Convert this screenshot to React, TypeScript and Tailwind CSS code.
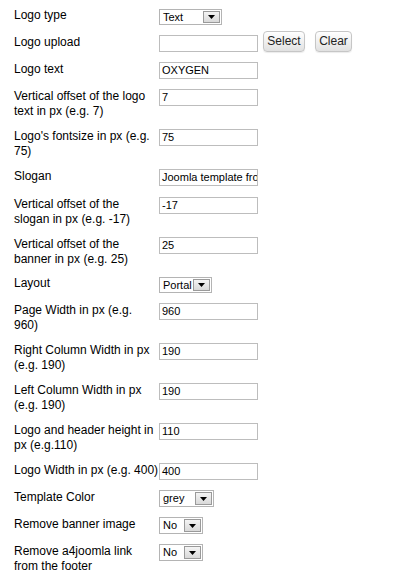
import React from 'react';

type Field =
  | { label: string[]; kind: 'text'; value: string }
  | { label: string[]; kind: 'select'; value: string; width: string; tall?: boolean }
  | { label: string[]; kind: 'upload' };

// Template parameters, in the order the form shows them
const fields: Field[] = [
  { label: ['Logo type'], kind: 'select', value: 'Text', width: 'w-[63px]' },
  { label: ['Logo upload'], kind: 'upload' },
  { label: ['Logo text'], kind: 'text', value: 'OXYGEN' },
  { label: ['Vertical offset of the logo', 'text in px (e.g. 7)'], kind: 'text', value: '7' },
  { label: ["Logo's fontsize in px (e.g.", '75)'], kind: 'text', value: '75' },
  { label: ['Slogan'], kind: 'text', value: 'Joomla template from a4joomla' },
  { label: ['Vertical offset of the', 'slogan in px (e.g. -17)'], kind: 'text', value: '-17' },
  { label: ['Vertical offset of the', 'banner in px (e.g. 25)'], kind: 'text', value: '25' },
  { label: ['Layout'], kind: 'select', value: 'Portal', width: 'w-[53px]' },
  { label: ['Page Width in px (e.g.', '960)'], kind: 'text', value: '960' },
  { label: ['Right Column Width in px', '(e.g. 190)'], kind: 'text', value: '190' },
  { label: ['Left Column Width in px', '(e.g. 190)'], kind: 'text', value: '190' },
  { label: ['Logo and header height in', 'px (e.g.110)'], kind: 'text', value: '110' },
  { label: ['Logo Width in px (e.g. 400)'], kind: 'text', value: '400' },
  { label: ['Template Color'], kind: 'select', value: 'grey', width: 'w-[55px]', tall: true },
  { label: ['Remove banner image'], kind: 'select', value: 'No', width: 'w-[44px]', tall: true },
  { label: ['Remove a4joomla link', 'from the footer'], kind: 'select', value: 'No', width: 'w-[44px]', tall: true },
];

const TextInput = ({ value }: { value: string }) => (
  <div className="w-[99px] h-[17px] border border-[#bdbdbd] bg-white pl-[2px] text-[11px] leading-[15px] text-black overflow-hidden whitespace-nowrap">
    {value}
  </div>
);

const FakeSelect = ({ value, width, tall }: { value: string; width: string; tall?: boolean }) => (
  <div
    className={`${width} ${tall ? 'h-[17px]' : 'h-[16px]'} flex items-stretch border border-[#b4b4b4] bg-white`}
  >
    <span className="flex-1 pl-[3px] text-[11px] leading-[14px] text-black overflow-hidden whitespace-nowrap">
      {value}
    </span>
    <span className="w-[17px] my-[1px] mr-[1px] flex items-center justify-center border border-[#9a9a9a] bg-gradient-to-b from-[#f4f4f4] to-[#d9d9d9]">
      <svg width="7" height="4" viewBox="0 0 7 4">
        <path d="M0 0h7L3.5 4z" fill="#000" />
      </svg>
    </span>
  </div>
);

const Button = ({ children, width }: { children: React.ReactNode; width: string }) => (
  <button
    className={`${width} h-[21px] -mt-[4px] rounded-[4px] border border-[#c6c6c6] bg-gradient-to-b from-white to-[#e1e1e1] text-[12px] leading-[19px] text-[#222] shadow-[0_1px_1px_rgba(0,0,0,0.08)]`}
  >
    {children}
  </button>
);

export default function App() {
  return (
    <div
      className="w-[407px] min-h-[587px] bg-white pt-[4px] pl-[14px] text-black"
      style={{ fontFamily: '"Liberation Sans", Arial, sans-serif' }}
    >
      {fields.map((f, i) => {
        const isSlimSelect = f.kind === 'select' && !f.tall;
        return (
          <div key={i} className={`flex items-start pt-[5px] ${i === 5 ? 'pb-[6px]' : 'pb-[5px]'}`}>
            <div
              className={`w-[145px] shrink-0 text-[12px] leading-[15px] whitespace-nowrap ${
                isSlimSelect ? '-mt-[1px] mb-[-1px]' : ''
              }`}
            >
              {f.label.map((line, j) => (
                <div key={j}>{line}</div>
              ))}
            </div>
            {f.kind === 'text' && <TextInput value={f.value} />}
            {f.kind === 'select' && <FakeSelect value={f.value} width={f.width} tall={f.tall} />}
            {f.kind === 'upload' && (
              <div className="flex items-start">
                <TextInput value="" />
                <div className="ml-[5px] flex gap-[10px]">
                  <Button width="w-[42px]">Select</Button>
                  <Button width="w-[37px]">Clear</Button>
                </div>
              </div>
            )}
          </div>
        );
      })}
    </div>
  );
}
